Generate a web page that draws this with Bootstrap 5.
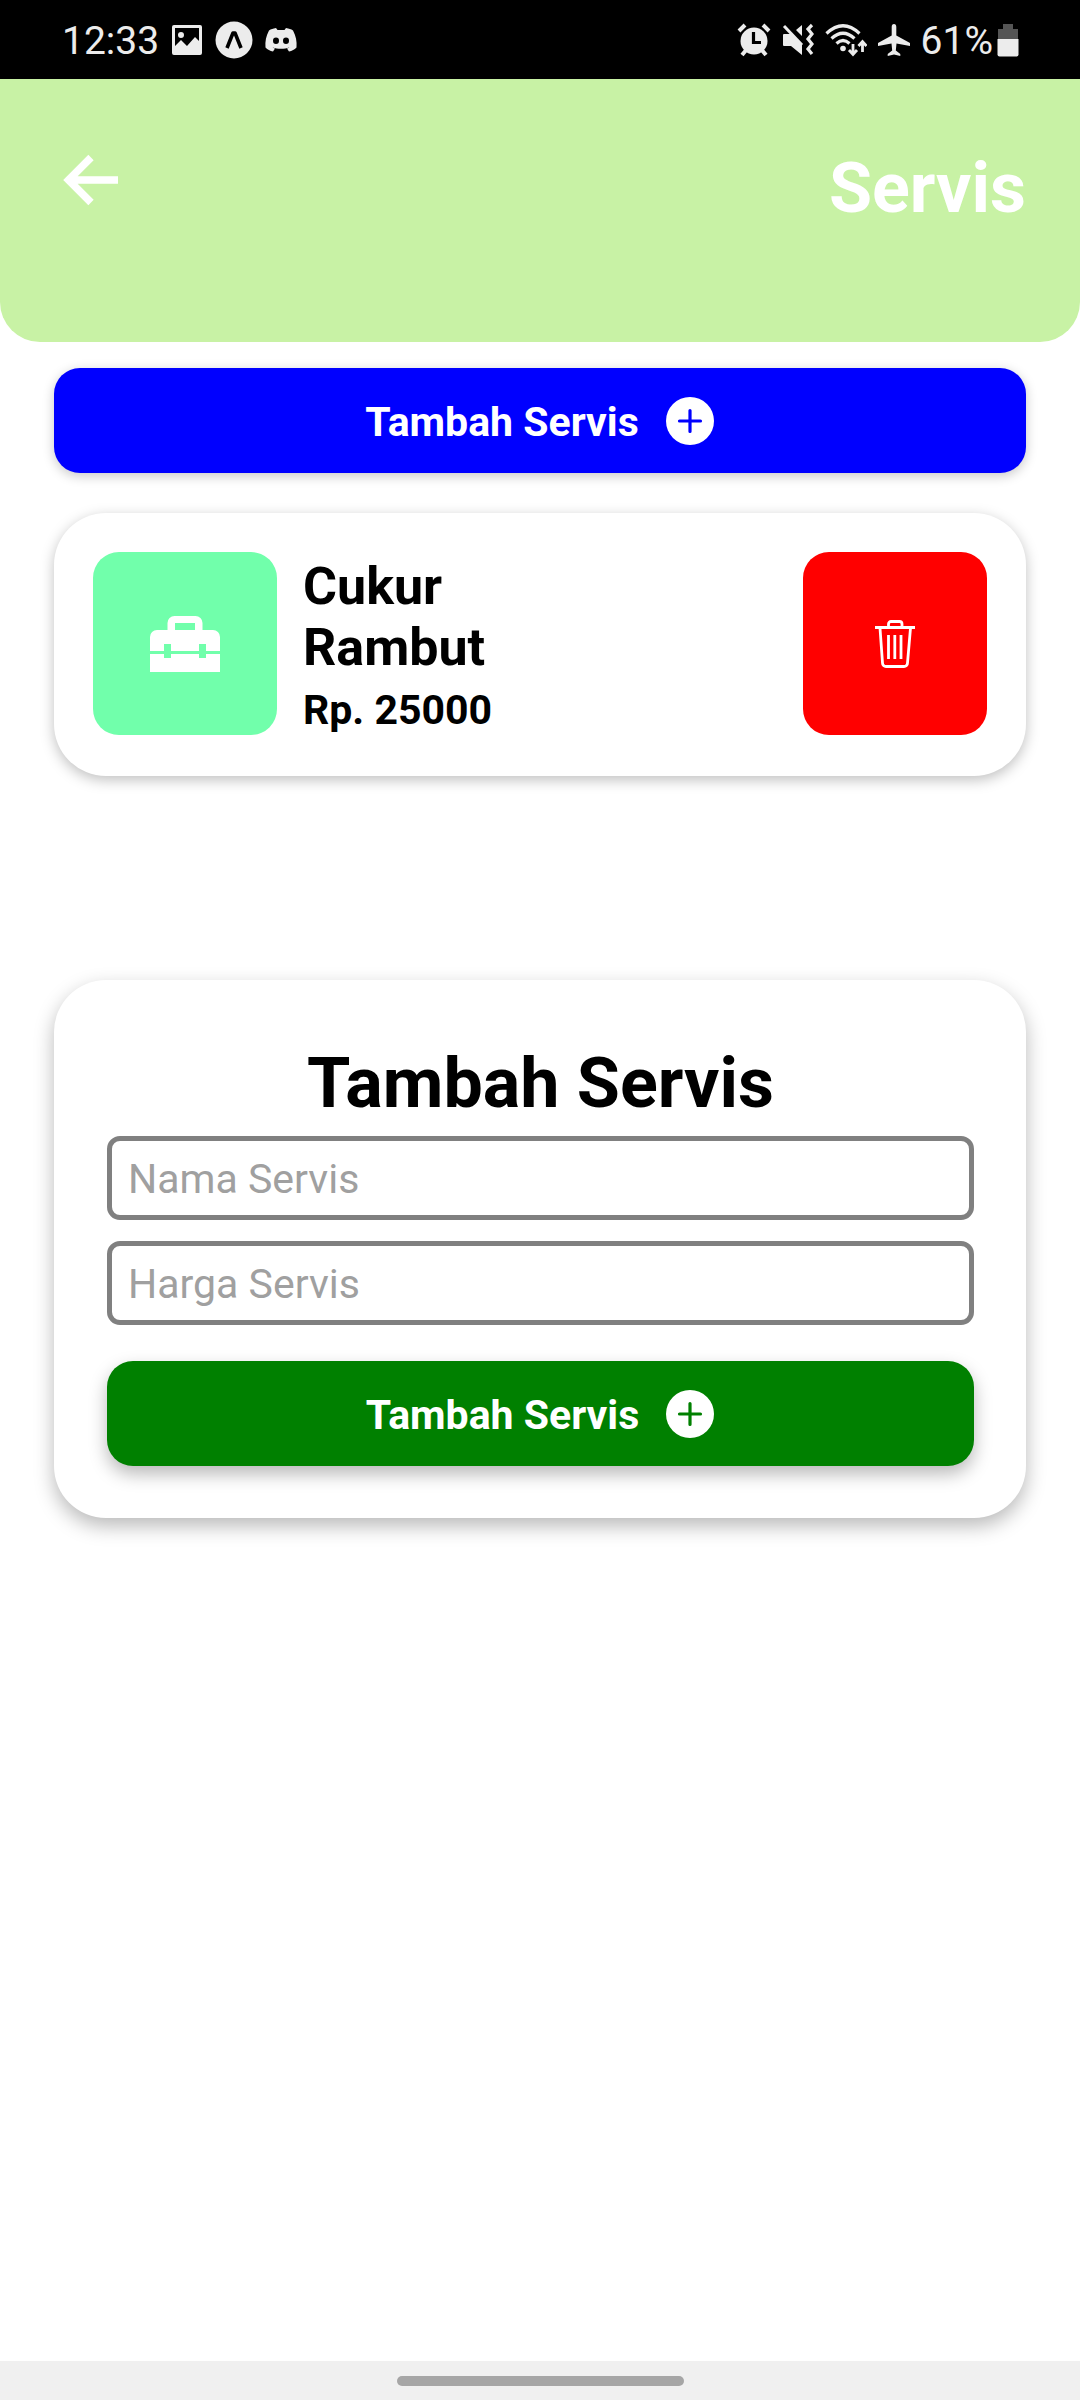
<!DOCTYPE html>
<html lang="id">
<head>
<meta charset="utf-8">
<meta name="viewport" content="width=device-width, initial-scale=1">
<title>Servis</title>
<link href="https://cdn.jsdelivr.net/npm/bootstrap@5.3.0/dist/css/bootstrap.min.css" rel="stylesheet">
<style>
  body { font-family: Roboto, "Liberation Sans", sans-serif; color: #000; background: #fff; }
  svg { display: block; flex: none; }
  .status-bar { height: 79px; padding: 0 61px 0 62px; background: #000; color: #ececec; font-size: 39px; line-height: 48px; }
  .status-icons { gap: 12px; }
  .status-icons + .status-icons { gap: 11px; }
  .status-icons span, .action-btn span { padding-top: 3px; }
  .app-header { background: #c8f2a5; border-radius: 0 0 40px 40px; padding: 67px 54px 112px; }
  .title-text { font-size: 70px; line-height: 84px; font-weight: 700; }
  .page-main { padding: 26px 54px; }
  .action-btn { height: 105px; border: 0; border-radius: 26px; color: #fff; font-size: 41px; line-height: 48px; font-weight: 700; gap: 26px; box-shadow: 0 3px 12px rgba(0,0,0,.22); }
  .action-btn:hover, .tile:hover { color: #fff; }
  .btn-blue, .btn-blue:hover { background: #00f; }
  .btn-green, .btn-green:hover { background: #008000; }
  .panel { border-radius: 52px; background: #fff; }
  .service-item { margin-top: 40px; padding: 39px 39px 41px; gap: 26px; box-shadow: 0 4px 14px rgba(0,0,0,.25); }
  .tile { width: 184px; height: 183px; border: 0; border-radius: 26px; flex: none; color: #fff; }
  .tile-mint { background: #71ffab; }
  .tile-red, .tile-red:hover { background: #f00; }
  .service-text { max-width: 260px; padding-top: 3px; font-weight: 700; }
  .service-name { font-size: 52px; line-height: 61px; font-weight: 700; margin-bottom: 8px; }
  .service-price { font-size: 41px; line-height: 48px; }
  .add-form { margin-top: 204px; padding: 61px 52px 52px 53px; box-shadow: 0 8px 20px rgba(0,0,0,.28); }
  .add-form .title-text { margin-bottom: 11px; }
  .add-form .action-btn { margin-top: 36px; box-shadow: 0 8px 18px rgba(0,0,0,.28); }
  .field { height: 84px; border: 5px solid #808080; border-radius: 13px; padding: 2px 16px 0; font-size: 41px; line-height: 48px; color: #000; }
  .field + .field { margin-top: 21px; }
  .field::placeholder { color: #a0a0a0; opacity: 1; }
  .gesture-bar { height: 39px; background: #f0f0f0; }
  .gesture-pill { width: 287px; height: 10px; border-radius: 5px; background: #a6a6a6; }
</style>
<script src="https://cdn.jsdelivr.net/npm/bootstrap@5.3.0/dist/js/bootstrap.bundle.min.js"></script>
</head>
<body class="d-flex flex-column min-vh-100">

<div class="status-bar d-flex align-items-center justify-content-between">
  <div class="status-icons d-flex align-items-center">
    <span>12:33</span>
    <svg width="32" height="32" viewBox="0 0 32 32"><path fill="#ececec" fill-rule="evenodd" d="M3 1h26a2 2 0 0 1 2 2v26a2 2 0 0 1-2 2H3a2 2 0 0 1-2-2V3a2 2 0 0 1 2-2zm1 3v18l6-6 6 6 8-9 4 4V4zM10 8a3 3 0 1 1 0 6 3 3 0 0 1 0-6z"/></svg>
    <svg width="38" height="38" viewBox="0 0 38 38"><circle cx="19" cy="19" r="18.5" fill="#ececec"/><path d="M12 27l6-15h2l6 15" fill="none" stroke="#000" stroke-width="3.6" stroke-linejoin="round"/></svg>
    <svg width="32" height="26" viewBox="0 0 32 26"><path fill="#ececec" fill-rule="evenodd" d="M11 1l1.500 2h7L21 1c3 .4 5 1.200 7 2.500 3 5.500 4 11 3.500 17-2 2-4.500 3.500-7.500 4l-2-3c1-.3 2-.8 2.500-1.300-5 2.200-12 2.200-17 0 .5.500 1.500 1 2.500 1.300l-2 3c-3-.5-5.500-2-7.500-4C0 14.500 1 9 4 3.500 6 2.200 8 1.400 11 1zm0 9.500a3 3.300 0 1 0 0 6.600 3 3.300 0 0 0 0-6.600zm10 0a3 3.300 0 1 0 0 6.600 3 3.300 0 0 0 0-6.600z"/></svg>
  </div>
  <div class="status-icons d-flex align-items-center">
    <svg width="34" height="34" viewBox="0 0 34 34"><circle cx="17" cy="18" r="13.500" fill="#ececec"/><path d="M2 8l6-6M32 8l-6-6M5 32l5-6M29 32l-5-6" stroke="#ececec" stroke-width="4"/><path d="M16.500 9v10.500H24" fill="none" stroke="#000" stroke-width="3.200"/></svg>
    <svg width="32" height="34" viewBox="0 0 32 34"><path fill="#ececec" d="M2 11h7l11 11v10L9 23H2a1 1 0 0 1-1-1V12a1 1 0 0 1 1-1zM20 2v11l-6-6z"/><path d="M2 3l18 19" stroke="#ececec" stroke-width="3"/><path d="M30 2l-4 4 4 5-4 5 4 5-4 5 4 5" fill="none" stroke="#ececec" stroke-width="3.200"/></svg>
    <svg width="42" height="34" viewBox="0 0 42 34"><g fill="none" stroke="#ececec" stroke-width="3.200"><path d="M1.500 10.500Q18 -5 34.500 10.500M6.500 15.500Q18 5 29.500 15.500M11.500 20.500Q18 14.500 24.500 20.500"/><path d="M28 21v10M24 27l4 4.500 4-4.500M37.500 29V18.500M33.500 23l4-4.500 4 4.500" stroke-width="2.800"/></g><circle cx="18" cy="25.500" r="2.800" fill="#ececec"/></svg>
    <svg width="32" height="34" viewBox="0 0 32 34"><path fill="#ececec" d="M16 1c1.500 0 2.300 1.300 2.300 3v8.500L32 20v3l-13.500-2.500-.7 7 4.500 3.500v2L16 31.500 9.700 33v-2l4.500-3.500-.7-7L0 23v-3l13.700-7.500V4c0-1.700.8-3 2.300-3z"/></svg>
    <div class="d-flex align-items-center">
      <span class="me-1">61%</span>
      <svg width="22" height="34" viewBox="0 0 22 34"><path fill="#555" d="M6 1h10v5h5v10H1V6h5z"/><path fill="#ececec" d="M.5 16h21v15.500a2 2 0 0 1-2 2h-17a2 2 0 0 1-2-2z"/></svg>
    </div>
  </div>
</div>

<header class="app-header d-flex justify-content-between align-items-start">
  <a href="#" aria-label="Kembali" class="ps-2">
    <svg width="60" height="68" viewBox="0 0 60 68"><path d="M29 11.500L6.500 34 29 56.500M6 34h50" fill="none" stroke="#fff" stroke-width="7.500"/></svg>
  </a>
  <h1 class="title-text text-white mb-0">Servis</h1>
</header>

<main class="page-main flex-grow-1">
  <button type="button" class="btn action-btn btn-blue w-100 d-flex align-items-center justify-content-center">
    <span>Tambah Servis</span>
    <svg width="50" height="50" viewBox="0 0 50 50"><circle cx="25" cy="25" r="24" fill="#fff"/><path d="M25 14.500v21M14.500 25h21" stroke="#00f" stroke-width="3.200" stroke-linecap="round"/></svg>
  </button>

  <article class="panel service-item d-flex align-items-center">
    <div class="tile tile-mint d-flex align-items-center justify-content-center">
      <svg width="70" height="56" viewBox="0 0 70 56"><path fill="#fff" fill-rule="evenodd" d="M24.500 0h21a7 7 0 0 1 7 7v7H63a7 7 0 0 1 7 7v14H56v-7h-7v7H21v-7h-7v7H0V21a7 7 0 0 1 7-7h10.500V7a7 7 0 0 1 7-7zm.5 7v7h20V7zM0 38h14v4h7v-4h28v4h7v-4h14v18H0z"/></svg>
    </div>
    <div class="service-text">
      <h2 class="service-name">Cukur Rambut</h2>
      <div class="service-price">Rp. 25000</div>
    </div>
    <button type="button" aria-label="Hapus" class="btn tile tile-red ms-auto d-flex align-items-center justify-content-center">
      <svg width="40" height="48" viewBox="0 0 40 48"><g fill="none" stroke="#fff" stroke-width="2.800"><path d="M0 7.500h40M13.500 7V4a2.500 2.500 0 0 1 2.500-2.500h8.500A2.500 2.500 0 0 1 27 4v3"/><path d="M5 8l2.500 35a3.500 3.500 0 0 0 3.500 3.500h18a3.500 3.500 0 0 0 3.500-3.500L35.500 8M13.500 15v24M19.800 15v24M26 15v24"/></g></svg>
    </button>
  </article>

  <form class="panel add-form">
    <h2 class="title-text text-center">Tambah Servis</h2>
    <input type="text" class="form-control field" placeholder="Nama Servis" aria-label="Nama Servis">
    <input type="text" inputmode="numeric" class="form-control field" placeholder="Harga Servis" aria-label="Harga Servis">
    <button type="button" class="btn action-btn btn-green w-100 d-flex align-items-center justify-content-center">
      <span>Tambah Servis</span>
      <svg width="50" height="50" viewBox="0 0 50 50"><circle cx="25" cy="25" r="24" fill="#fff"/><path d="M25 14.500v21M14.500 25h21" stroke="#008000" stroke-width="3.200" stroke-linecap="round"/></svg>
    </button>
  </form>
</main>

<footer class="gesture-bar d-flex align-items-center justify-content-center">
  <div class="gesture-pill"></div>
</footer>
</body>
</html>
